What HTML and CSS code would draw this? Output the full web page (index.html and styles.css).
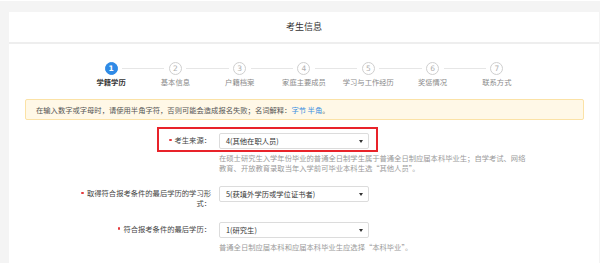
FILE: index.html
```html
<!DOCTYPE html>
<html lang="zh-CN">
<head>
<meta charset="utf-8">
<title>考生信息</title>
<link rel="stylesheet" href="styles.css">
</head>
<body>
<div class="page">
  <div class="panel">
    <div class="panel-head">考生信息</div>
    <ol class="steps">
      <li class="step active"><span class="circle">1</span><span class="step-label">学籍学历</span></li>
      <li class="step"><span class="circle">2</span><span class="step-label">基本信息</span></li>
      <li class="step"><span class="circle">3</span><span class="step-label">户籍档案</span></li>
      <li class="step"><span class="circle">4</span><span class="step-label">家庭主要成员</span></li>
      <li class="step"><span class="circle">5</span><span class="step-label">学习与工作经历</span></li>
      <li class="step"><span class="circle">6</span><span class="step-label">奖惩情况</span></li>
      <li class="step"><span class="circle">7</span><span class="step-label">联系方式</span></li>
    </ol>
    <div class="alert">在输入数字或字母时，请使用半角字符，否则可能会造成报名失败；名词解释：<a class="alert-link">字节 半角</a>。</div>
    <div class="form">
      <div class="row row-first">
        <div class="label"><span class="req"></span>考生来源：</div>
        <div class="field">
          <div class="select">4(其他在职人员)<span class="arrow"></span></div>
          <p class="help">在硕士研究生入学年份毕业的普通全日制学生属于普通全日制应届本科毕业生；自学考试、网络教育、开放教育录取当年入学前可毕业本科生选“其他人员”。</p>
        </div>
        <div class="mark"></div>
      </div>
      <div class="row">
        <div class="label"><span class="req"></span>取得符合报考条件的最后学历的学习形式：</div>
        <div class="field">
          <div class="select">5(获境外学历或学位证书者)<span class="arrow"></span></div>
        </div>
      </div>
      <div class="row">
        <div class="label"><span class="req"></span>符合报考条件的最后学历：</div>
        <div class="field">
          <div class="select">1(研究生)<span class="arrow"></span></div>
          <p class="help help-last">普通全日制应届本科和应届本科毕业生应选择“本科毕业”。</p>
        </div>
      </div>
    </div>
  </div>
</div>
</body>
</html>
```

FILE: styles.css
```css
* { box-sizing: border-box; }
html, body {
  margin: 0;
  padding: 0;
  background: #ffffff;
  font-family: "Noto Sans CJK SC", "Noto Sans", sans-serif;
}
.page {
  border-top: 1px solid #ffffff;
  background: #f4f4f4;
  height: 263px;
  padding: 11px 1px 0 9px;
  overflow: hidden;
}
.panel {
  background: #ffffff;
  height: 260px;
}
.panel-head {
  height: 32px;
  border-bottom: 2px solid #eeeeee;
  display: flex;
  align-items: center;
  justify-content: center;
  font-size: 9px;
  color: #333333;
  padding-bottom: 1px;
}
.steps {
  list-style: none;
  margin: 0;
  padding: 18px 0 0;
  display: flex;
  justify-content: center;
}
.step {
  position: relative;
  flex: 0 0 64.3px;
  display: flex;
  flex-direction: column;
  align-items: center;
}
.step::after {
  content: "";
  position: absolute;
  top: 6px;
  left: calc(50% + 11px);
  width: calc(100% - 22px);
  height: 1px;
  background: #e6e6e6;
}
.step:last-child::after { display: none; }
.circle {
  width: 13px;
  height: 13px;
  border-radius: 50%;
  border: 1px solid #cfcfcf;
  color: #b0b0b0;
  font-size: 7.5px;
  line-height: 11px;
  text-align: center;
  font-family: "DejaVu Sans", sans-serif;
}
.step-label {
  margin-top: 2px;
  font-size: 7.3px;
  line-height: 10px;
  color: #8a8a8a;
  white-space: nowrap;
}
.step.active .circle {
  background: #2f8ae6;
  border-color: #2f8ae6;
  color: #ffffff;
  font-weight: bold;
}
.step.active .step-label {
  color: #333333;
  font-weight: bold;
}
.alert {
  margin: 12px 15px 0 16px;
  height: 21px;
  border: 1px solid #fbe2a6;
  background: #fff8e7;
  border-radius: 2px;
  padding-left: 10px;
  display: flex;
  align-items: center;
  font-size: 7.3px;
  color: #555555;
  white-space: nowrap;
}
.alert-link {
  color: #3b8ee0;
}
.form {
  padding-top: 13px;
}
.row {
  position: relative;
  display: flex;
  align-items: flex-start;
  margin-bottom: 13.5px;
}
.label {
  flex: 0 0 136px;
  margin-left: 66px;
  padding-top: 3px;
  text-align: right;
  font-size: 7.3px;
  line-height: 9.5px;
  color: #444444;
}
.req {
  display: inline-block;
  width: 2.5px;
  height: 2.5px;
  background: #e4393c;
  border-radius: 50%;
  vertical-align: middle;
  margin-right: 3px;
  position: relative;
  top: -1px;
}
.field {
  margin-left: 8px;
}
.select {
  position: relative;
  width: 150px;
  height: 16px;
  border: 1px solid #dcdcdc;
  border-radius: 2px;
  padding-left: 6px;
  font-size: 7.3px;
  line-height: 14px;
  color: #333333;
}
.arrow {
  position: absolute;
  right: 5px;
  top: 6px;
  width: 0;
  height: 0;
  border-left: 2px solid transparent;
  border-right: 2px solid transparent;
  border-top: 3px solid #333333;
}
.help {
  margin: 3.5px 0 0;
  width: 310px;
  font-size: 7.3px;
  line-height: 10px;
  color: #9a9a9a;
}
.help-last {
  margin-top: 4.5px;
}
.mark {
  position: absolute;
  left: 148px;
  top: -6px;
  width: 221px;
  height: 25px;
  border: 2px solid #e8232a;
}
```
